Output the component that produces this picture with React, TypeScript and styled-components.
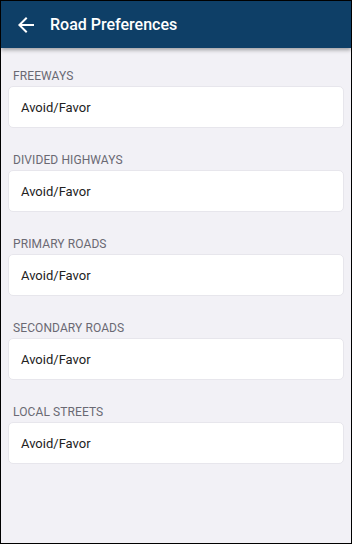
import React from "react";
import styled, { createGlobalStyle } from "styled-components";

const Global = createGlobalStyle`
  html, body { margin: 0; padding: 0; }
  body { font-family: Roboto, "Noto Sans", Arial, sans-serif; background: #f2f1f6; }
  * { box-sizing: border-box; }
`;

const Frame = styled.div`
  width: 352px;
  height: 544px;
  border: 1px solid #000;
  background: #f2f1f6;
  display: flex;
  flex-direction: column;
  overflow: hidden;
`;

const Header = styled.header`
  height: 47px;
  flex: none;
  background: #0e3f67;
  display: flex;
  align-items: center;
  padding-left: 13px;
  gap: 12px;
  box-shadow: 0 2px 4px rgba(0, 0, 0, 0.35);
  position: relative;
  z-index: 1;
`;

const BackButton = styled.button`
  width: 24px;
  height: 24px;
  padding: 0;
  border: none;
  background: transparent;
  display: flex;
  align-items: center;
  justify-content: center;
  cursor: pointer;
`;

const Title = styled.h1`
  margin: 0;
  color: #ffffff;
  font-size: 16px;
  font-weight: 500;
`;

const Content = styled.main`
  flex: 1;
  display: flex;
  flex-direction: column;
  gap: 24px;
  padding: 20px 7px 0 7px;
`;

const Section = styled.section`
  display: flex;
  flex-direction: column;
  gap: 2px;
`;

const Label = styled.div`
  height: 16px;
  line-height: 16px;
  font-size: 12px;
  font-weight: 400;
  color: #6a6973;
  padding-left: 5px;
  text-transform: uppercase;
  letter-spacing: 0.1px;
`;

const Card = styled.div`
  height: 42px;
  background: #ffffff;
  border: 1px solid #e7e6ec;
  border-radius: 5px;
  display: flex;
  align-items: center;
  padding-left: 12px;
  font-size: 13px;
  color: #222222;
`;

const sections = [
  "Freeways",
  "Divided Highways",
  "Primary Roads",
  "Secondary Roads",
  "Local Streets",
];

export default function App() {
  return (
    <>
      <Global />
      <Frame>
        <Header>
          <BackButton aria-label="Back">
            <svg width="24" height="24" viewBox="0 0 24 24">
              <path
                d="M20 11H7.83l5.59-5.59L12 4l-8 8 8 8 1.41-1.41L7.83 13H20v-2z"
                fill="#ffffff"
              />
            </svg>
          </BackButton>
          <Title>Road Preferences</Title>
        </Header>
        <Content>
          {sections.map((s) => (
            <Section key={s}>
              <Label>{s}</Label>
              <Card>Avoid/Favor</Card>
            </Section>
          ))}
        </Content>
      </Frame>
    </>
  );
}
